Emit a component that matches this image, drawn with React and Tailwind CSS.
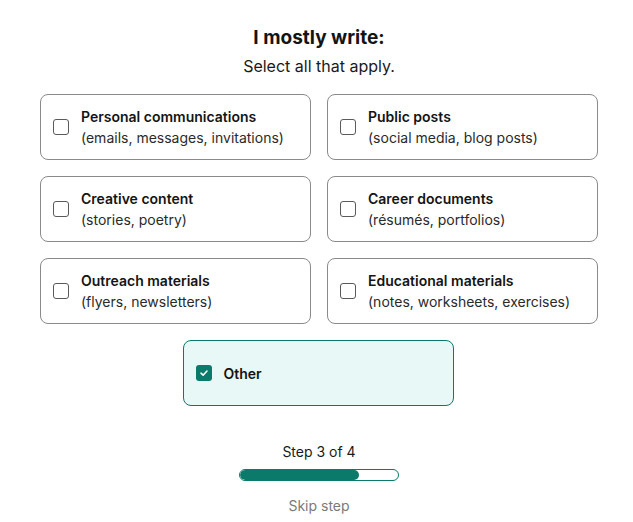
import React from "react";

const items = [
  ["Personal communications", "(emails, messages, invitations)"],
  ["Public posts", "(social media, blog posts)"],
  ["Creative content", "(stories, poetry)"],
  ["Career documents", "(résumés, portfolios)"],
  ["Outreach materials", "(flyers, newsletters)"],
  ["Educational materials", "(notes, worksheets, exercises)"],
];

function Box() {
  return <div className="w-4 h-4 shrink-0 rounded-[3px] border border-[#5a5a5a] bg-white" />;
}

export default function App() {
  return (
    <div className="bg-white min-h-[522px] w-[633px] text-[#1a1a1a]" style={{ fontFamily: "Inter, 'Noto Sans', sans-serif" }}>
      <div className="w-[558px] ml-[40px] flex flex-col items-center pt-[26px]">
        <h1 className="text-[19px] leading-[24px] font-bold text-[#141414]">I mostly write:</h1>
        <p className="text-[16px] leading-[22px] mt-[5px] text-[#1a1a1a]">Select all that apply.</p>
        <div className="grid grid-cols-2 gap-x-[16px] gap-y-[16px] w-full mt-[17px]">
          {items.map(([t, s]) => (
            <div key={t} className="h-[66px] rounded-[8px] border border-[#8a8a8a] flex items-center pl-[12px] gap-[12px]">
              <Box />
              <div className="flex flex-col">
                <span className="text-[14px] leading-[21px] font-semibold text-[#141414]">{t}</span>
                <span className="text-[14px] leading-[21px] text-[#2a2a2a]">{s}</span>
              </div>
            </div>
          ))}
        </div>
        <div className="mt-[16px] mr-[2px] w-[271px] h-[66px] rounded-[8px] border border-[#0b7a6a] bg-[#e8f8f6] flex items-center pl-[12px] gap-[12px]">
          <div className="w-4 h-4 rounded-[3px] bg-[#0b7a6a] flex items-center justify-center">
            <svg width="10" height="10" viewBox="0 0 10 10" fill="none">
              <path d="M2 5.2 L4.1 7.2 L8 3" stroke="white" strokeWidth="1.6" strokeLinecap="round" strokeLinejoin="round" />
            </svg>
          </div>
          <span className="text-[14px] leading-[21px] font-semibold text-[#141414]">Other</span>
        </div>
        <p className="mt-[36px] text-[14px] leading-[20px] text-[#1a1a1a]">Step 3 of 4</p>
        <div className="mt-[7px] w-[160px] h-[12px] rounded-full border border-[#0b7a6a] bg-white overflow-hidden">
          <div className="h-full w-[75%] rounded-full bg-[#0b7a6a]" />
        </div>
        <p className="mt-[15px] text-[14px] leading-[20px] text-[#7a7a7a]">Skip step</p>
      </div>
    </div>
  );
}
